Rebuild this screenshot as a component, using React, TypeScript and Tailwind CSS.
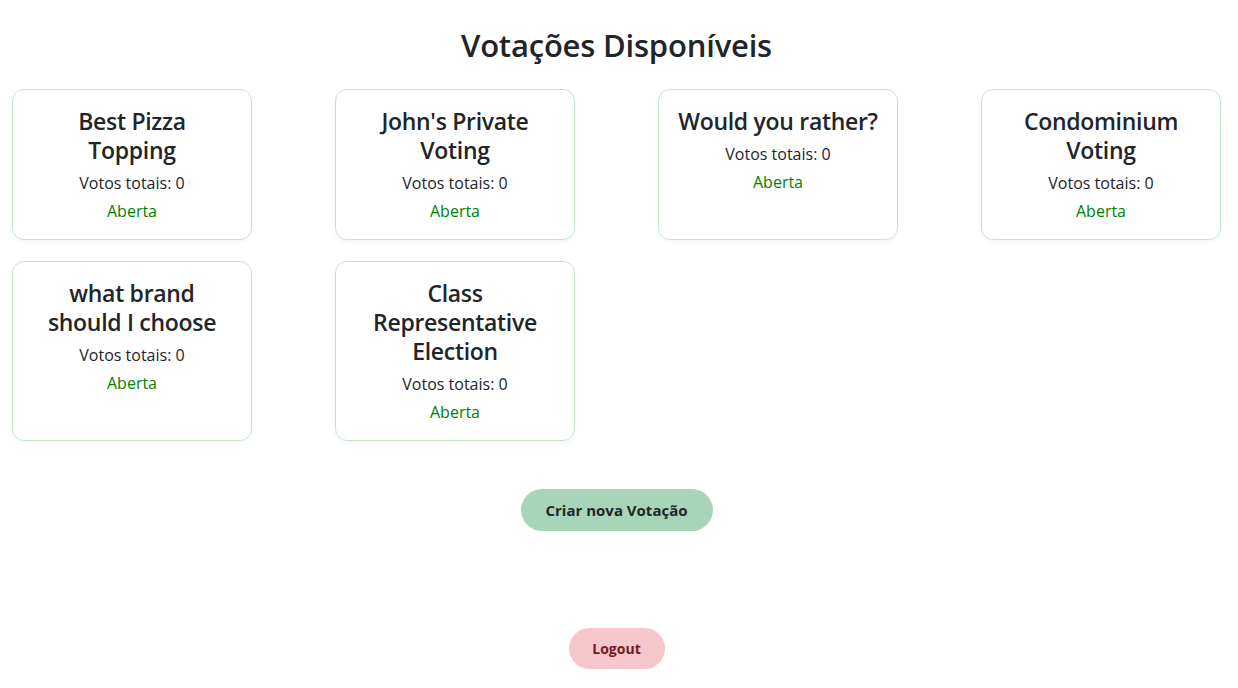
import React from "react";

const polls = [
  { lines: ["Best Pizza", "Topping"], votes: 0 },
  { lines: ["John's Private", "Voting"], votes: 0 },
  { lines: ["Would you rather?"], votes: 0 },
  { lines: ["Condominium", "Voting"], votes: 0 },
  { lines: ["what brand", "should I choose"], votes: 0 },
  { lines: ["Class", "Representative", "Election"], votes: 0 },
];

export default function App() {
  return (
    <div
      className="w-[1233px] bg-white text-[#212529] min-h-[688px]"
      style={{ fontFamily: "'Open Sans', 'Noto Sans', sans-serif" }}
    >
      <div className="px-[12px] pt-[26px] flex flex-col items-center">
        <h1 className="text-[31px] leading-[38px] font-semibold text-center mb-[25px] tracking-[-0.2px]">
          Votações Disponíveis
        </h1>
        <div className="w-full grid grid-cols-[repeat(4,240px)] gap-x-[83px] gap-y-[21px]">
          {polls.map((p) => (
            <div
              key={p.lines.join(" ")}
              className="border border-[#c3e6cb] rounded-[12px] shadow-[0_2px_4px_rgba(0,0,0,0.04)] pt-[17px] pb-[16px] px-[16px] text-center"
            >
              <h2 className="text-[23px] leading-[29px] font-semibold mb-[6px] tracking-[-0.3px]">
                {p.lines.map((l, i) => (
                  <span key={i} className="block whitespace-nowrap">
                    {l}
                  </span>
                ))}
              </h2>
              <p className="text-[16px] leading-[24px] mb-[4px]">Votos totais: {p.votes}</p>
              <p className="text-[16px] leading-[24px] text-[#008000]">Aberta</p>
            </div>
          ))}
        </div>
        <button className="mt-[48px] w-[192px] h-[42px] rounded-full bg-[#a8d5ba] text-[15px] font-bold text-[#212529]">
          Criar nova Votação
        </button>
        <button className="mt-[97px] w-[96px] h-[41px] rounded-full bg-[#f5c6cb] text-[14px] font-bold text-[#721c24]">
          Logout
        </button>
      </div>
    </div>
  );
}
